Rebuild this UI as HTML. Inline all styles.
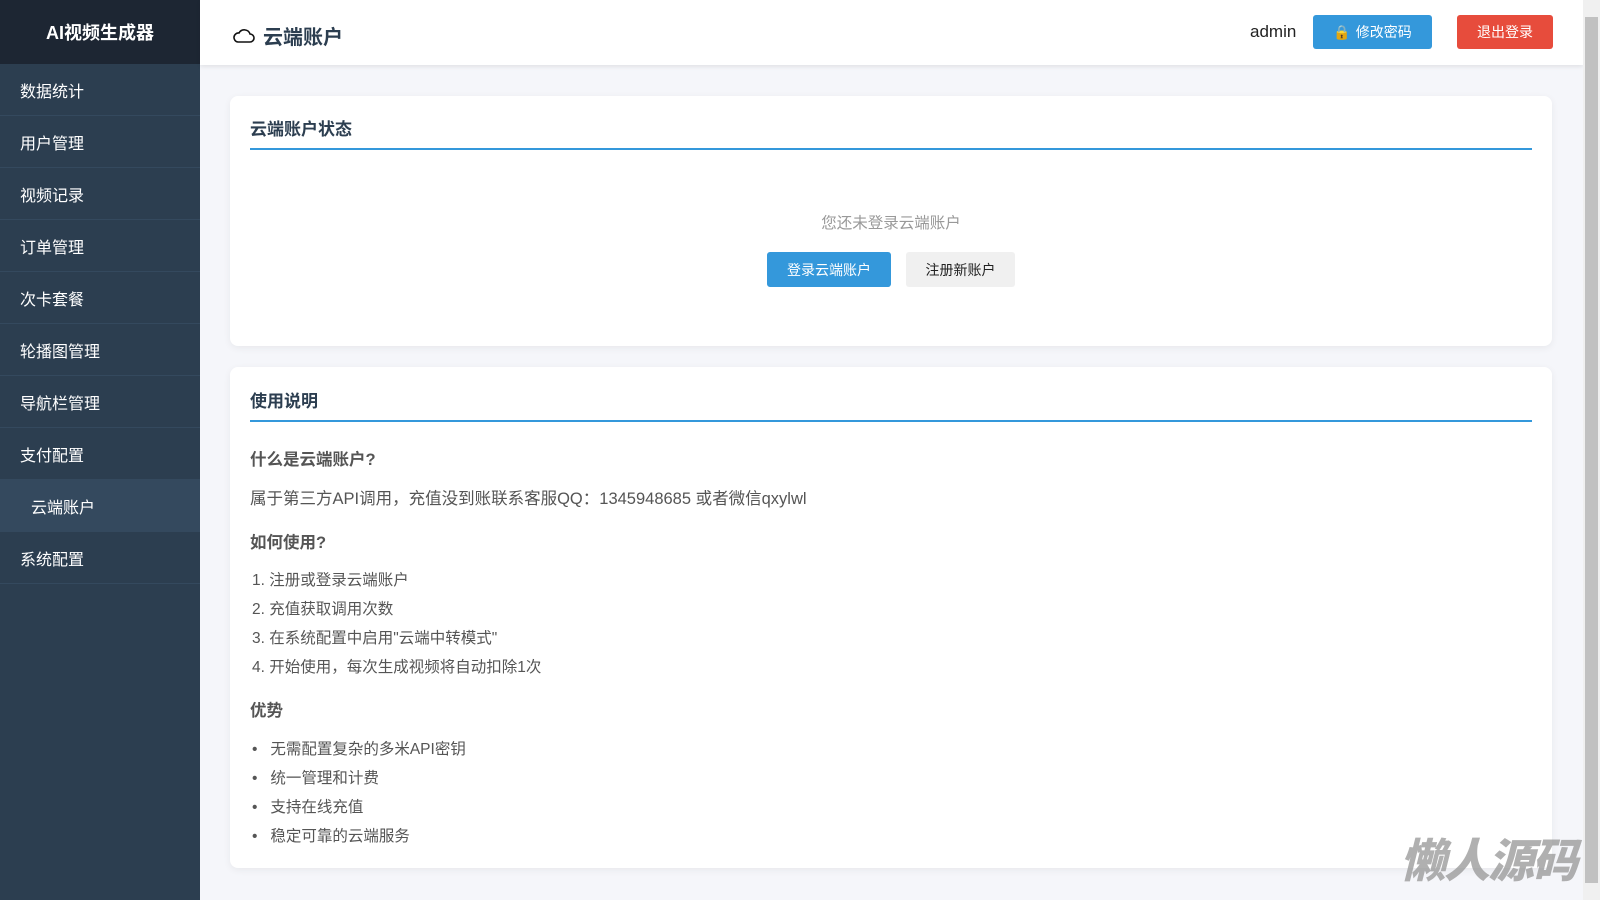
<!DOCTYPE html>
<html><head><meta charset="utf-8"><style>
*{margin:0;padding:0;box-sizing:border-box}
body{width:1600px;height:900px;overflow:hidden;background:#f5f6fa;font-family:"Liberation Sans","Noto Sans CJK SC",sans-serif;position:relative}
.side{position:absolute;left:0;top:0;width:200px;height:900px;background:#2c3e50}
.logo{height:64px;background:#1d2633;color:#fff;font-weight:bold;font-size:18px;display:flex;align-items:center;justify-content:center}
.item{height:52px;line-height:57px;color:#fff;font-size:16px;padding-left:20px;border-bottom:1px solid #34495e}
.item.act{background:#34495e;padding-left:31px}
.head{position:absolute;left:200px;top:0;width:1383px;height:65px;background:#fff;box-shadow:0 2px 4px rgba(0,0,0,.08)}
.ttl{position:absolute;left:33px;top:21px;font-size:20px;font-weight:bold;color:#2c3e50;display:flex;align-items:center}
.admin{position:absolute;left:1050px;top:22px;font-size:17px;color:#222}
.btn{position:absolute;height:34px;border-radius:3px;color:#fff;font-size:14px;display:flex;align-items:center;justify-content:center}
.card{position:absolute;left:230px;width:1322px;background:#fff;border-radius:8px;box-shadow:0 2px 8px rgba(0,0,0,.06)}
.ct{position:absolute;left:20px;right:20px;font-size:17px;font-weight:bold;color:#2c3e50;border-bottom:2px solid #3498db}
.t{position:absolute;left:250px;font-size:16.5px;color:#555;white-space:nowrap}
.h{font-weight:bold}
.l{left:252px;font-size:15.5px}
.sb{position:absolute;left:1583px;top:0;width:17px;height:900px;background:#f0f0f0}
.sb div{position:absolute;left:2px;top:17px;width:13px;height:866px;background:#c1c1c1}
</style></head><body>
<div class="side">
<div class="logo">AI视频生成器</div>
<div class="item">数据统计</div><div class="item">用户管理</div><div class="item">视频记录</div><div class="item">订单管理</div><div class="item">次卡套餐</div><div class="item">轮播图管理</div><div class="item">导航栏管理</div><div class="item">支付配置</div><div class="item act">云端账户</div><div class="item">系统配置</div>
</div>
<div class="head">
<div class="ttl"><svg width="22" height="16" viewBox="0 0 22 16" style="margin-right:8px"><path d="M5 14h12a4 4 0 0 0 0-8 6 6 0 0 0-11-1A4.5 4.5 0 0 0 5 14z" fill="none" stroke="#111" stroke-width="1.6"/></svg>云端账户</div>
<div class="admin">admin</div>
<div class="btn" style="left:1113px;top:15px;width:119px;background:#3498db"><span style="color:#f5b82e;margin-right:5px">🔒</span>修改密码</div>
<div class="btn" style="left:1257px;top:15px;width:96px;background:#e74c3c">退出登录</div>
</div>
<div class="card" style="top:96px;height:250px">
<div class="ct" style="top:19px;height:35px">云端账户状态</div>
<div style="position:absolute;left:0;right:0;text-align:center;font-size:15.5px;color:#999;top:115px">您还未登录云端账户</div>
<div class="btn" style="left:537px;top:156px;width:124px;height:35px;background:#3498db">登录云端账户</div>
<div class="btn" style="left:676px;top:156px;width:109px;height:35px;background:#f0f0f0;color:#222">注册新账户</div>
</div>
<div class="card" style="top:367px;height:501px">
<div class="ct" style="top:20px;height:35px">使用说明</div>
</div>
<div class="t h" style="top:446px">什么是云端账户?</div>
<div class="t" style="top:485px">属于第三方API调用，充值没到账联系客服QQ：1345948685 或者微信qxylwl</div>
<div class="t h" style="top:529px">如何使用?</div>
<div class="t l" style="top:568px">1. 注册或登录云端账户</div>
<div class="t l" style="top:597px">2. 充值获取调用次数</div>
<div class="t l" style="top:626px">3. 在系统配置中启用"云端中转模式"</div>
<div class="t l" style="top:655px">4. 开始使用，每次生成视频将自动扣除1次</div>
<div class="t h" style="top:697px">优势</div>
<div class="t l" style="top:737px">•&nbsp;&nbsp;&nbsp;无需配置复杂的多米API密钥</div>
<div class="t l" style="top:766px">•&nbsp;&nbsp;&nbsp;统一管理和计费</div>
<div class="t l" style="top:795px">•&nbsp;&nbsp;&nbsp;支持在线充值</div>
<div class="t l" style="top:824px">•&nbsp;&nbsp;&nbsp;稳定可靠的云端服务</div>
<div style="position:absolute;left:1400px;top:834px;font-size:46px;font-weight:900;font-style:italic;color:rgba(150,150,150,.75);letter-spacing:-2px;line-height:54px">懒人源码</div>
<div class="sb"><div></div></div>
</body></html>
